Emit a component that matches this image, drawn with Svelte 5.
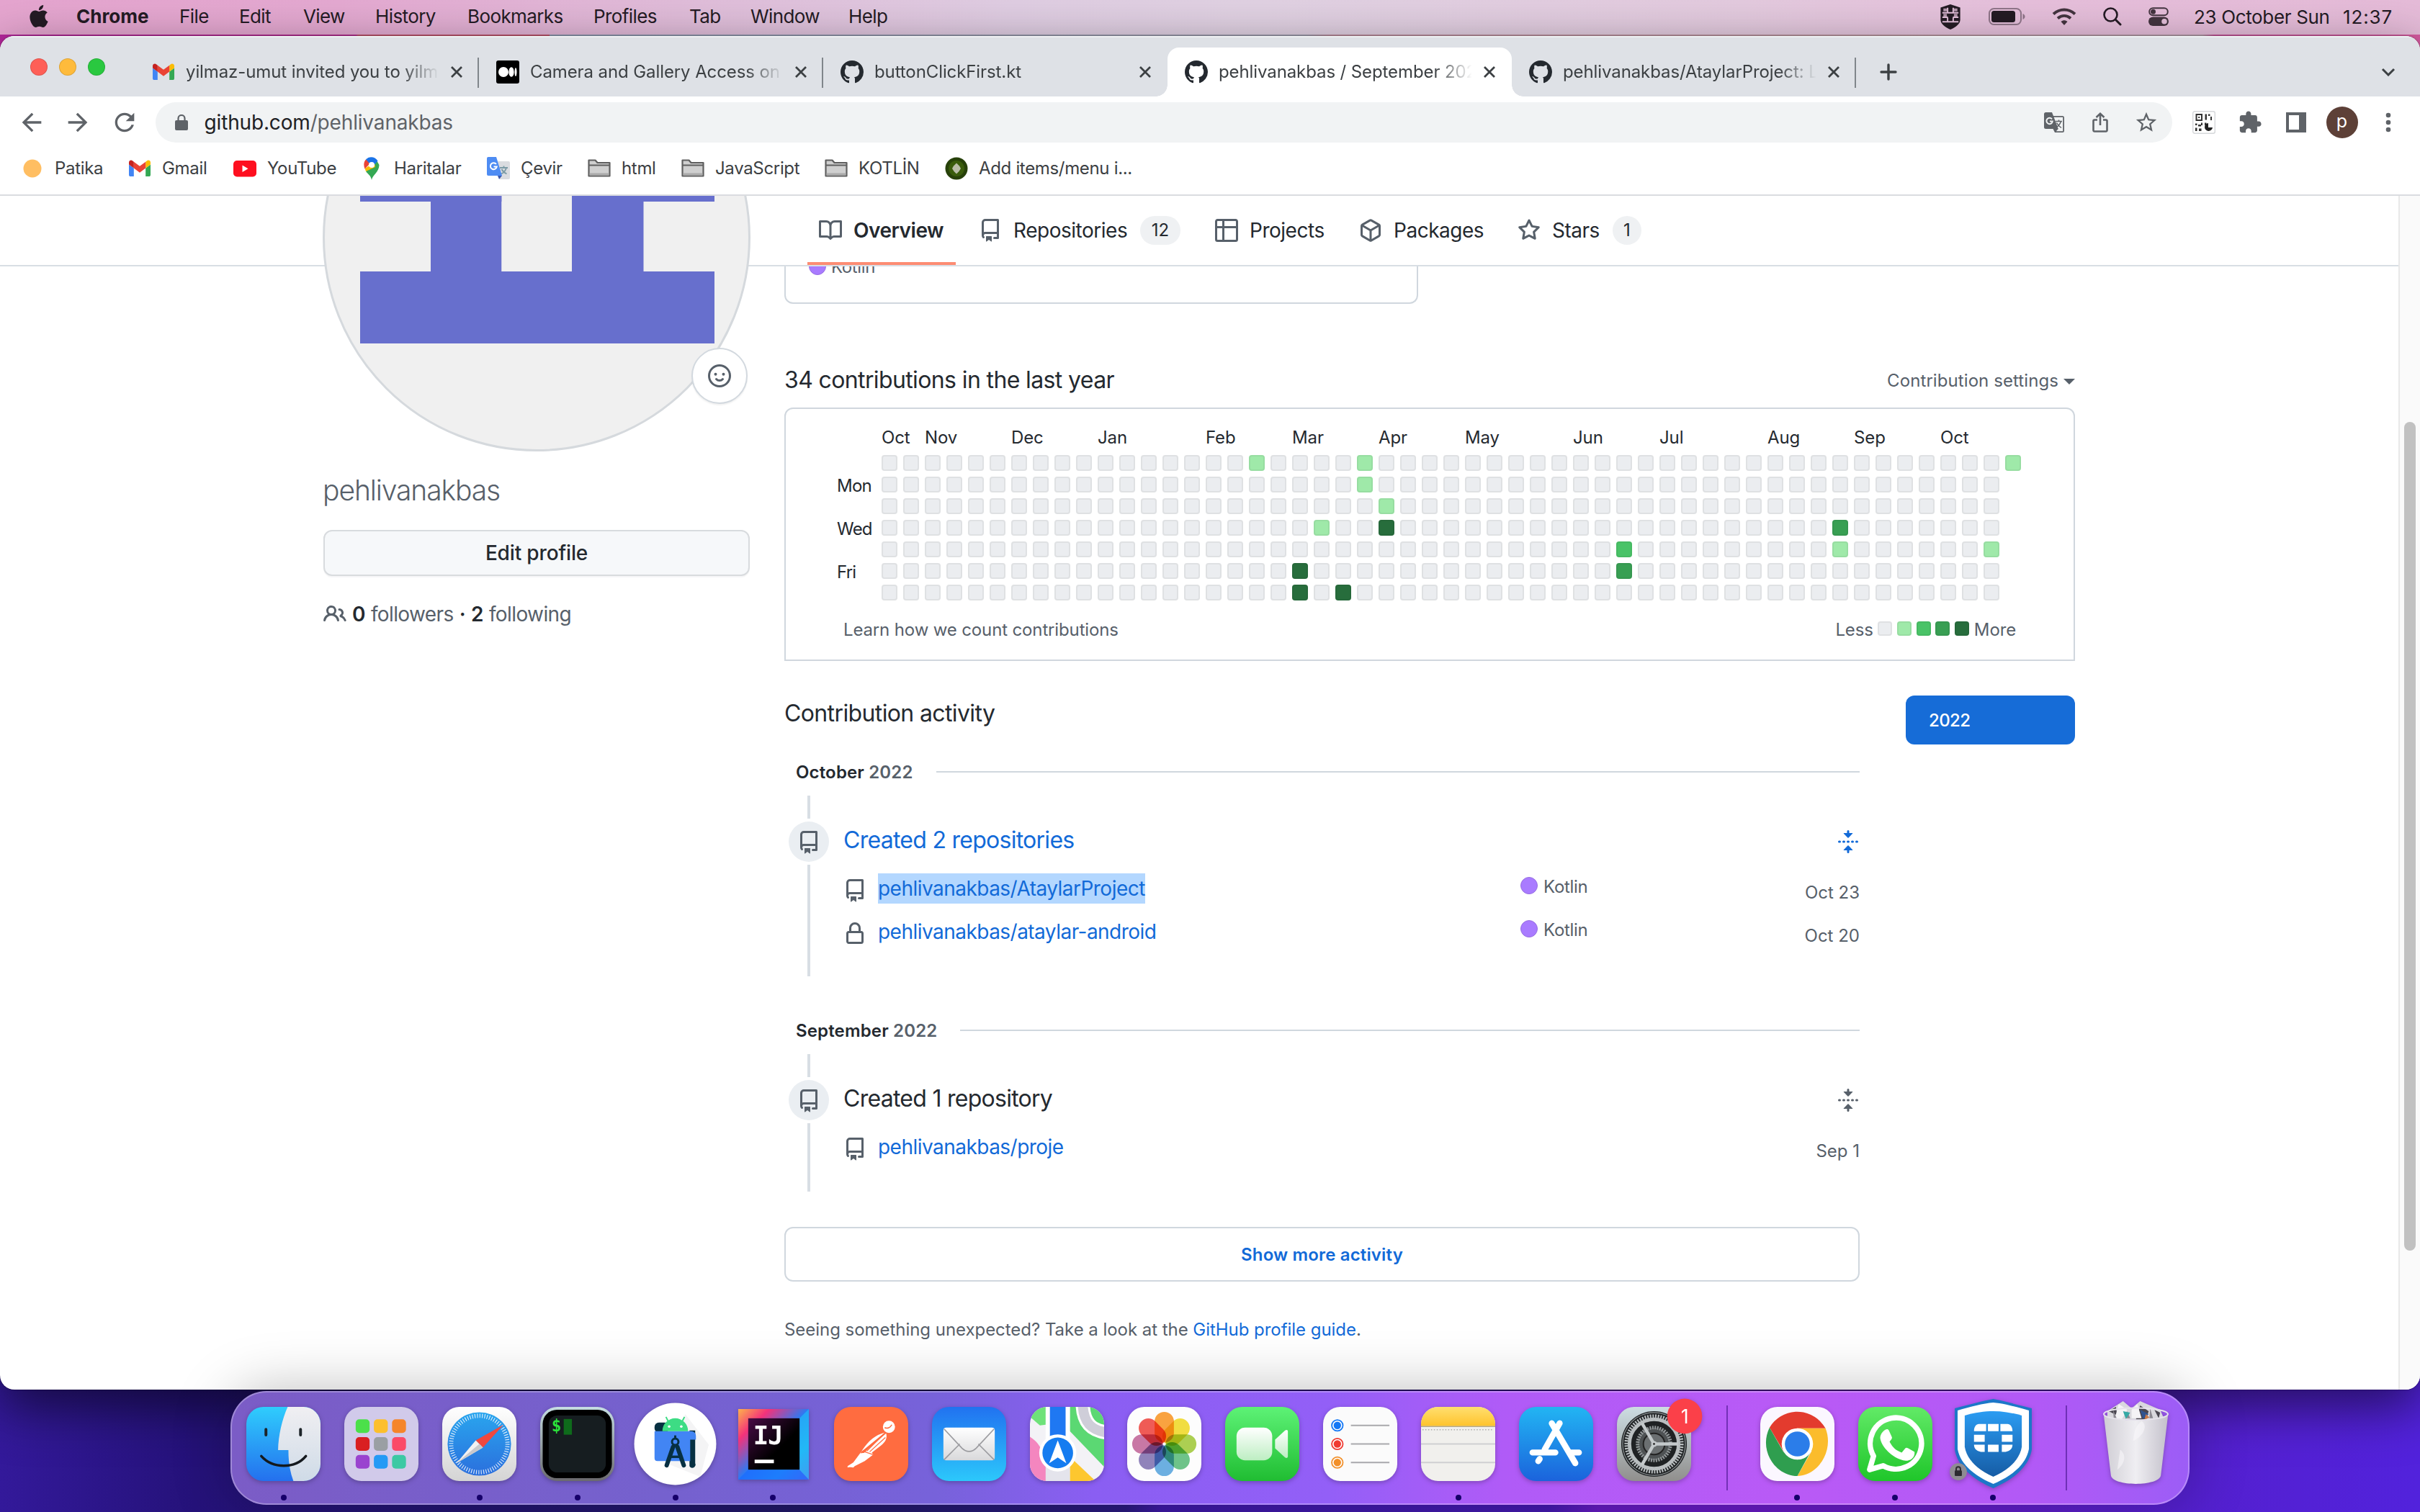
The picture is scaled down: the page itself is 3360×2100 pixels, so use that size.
<script>
  // Menu titles with their starting offset; each width is the distance to the next one.
  const menuStarts = [
    ['Chrome', 106], ['File', 249], ['Edit', 332], ['View', 421], ['History', 521], ['Bookmarks', 649],
    ['Profiles', 824], ['Tab', 957], ['Window', 1042], ['Help', 1178], ['', 1300]
  ];
  const menus = menuStarts.slice(0, -1).map(([label, x], i) => ({ label, width: menuStarts[i + 1][1] - x }));

  const tabs = [
    { icon: 'gmail', title: 'yilmaz-umut invited you to yilmaz', sep: true },
    { icon: 'medium', title: 'Camera and Gallery Access on A', sep: true },
    { icon: 'github', title: 'buttonClickFirst.kt' },
    { icon: 'github', title: 'pehlivanakbas / September 2022', active: true },
    { icon: 'github', title: 'pehlivanakbas/AtaylarProject: Lo', sep: true }
  ];

  const markStarts = [
    ['Patika', 'patika', 29], ['Gmail', 'gmail', 178], ['YouTube', 'youtube', 324], ['Haritalar', 'maps', 500],
    ['Çevir', 'translate', 676], ['html', 'folder', 816], ['JavaScript', 'folder', 946], ['KOTLİN', 'folder', 1145],
    ['Add items/menu i...', 'kiwi', 1312], ['', '', 1600]
  ];
  const bookmarks = markStarts.slice(0, -1).map(([label, icon, x], i) => ({ label, icon, width: markStarts[i + 1][2] - x }));

  const paths = {
    book: 'M0 1.75A.75.75 0 01.75 1h4.253c1.227 0 2.317.59 3 1.501A3.744 3.744 0 0111.006 1h4.245a.75.75 0 01.75.75v10.5a.75.75 0 01-.75.75h-4.507a2.25 2.25 0 00-1.591.659l-.622.621a.75.75 0 01-1.06 0l-.622-.621A2.25 2.25 0 005.258 13H.75a.75.75 0 01-.75-.75V1.75zm8.755 3a2.25 2.25 0 012.25-2.25H14.5v9h-3.757c-.71 0-1.4.201-1.992.572l.004-7.322zm-1.504 7.324l.004-5.073-.002-2.253A2.25 2.25 0 005.003 2.5H1.5v9h3.757a3.75 3.75 0 011.994.574z',
    repo: 'M2 2.5A2.5 2.5 0 014.5 0h8.75a.75.75 0 01.75.75v12.5a.75.75 0 01-.75.75h-2.5a.75.75 0 110-1.5h1.75v-2h-8a1 1 0 00-.714 1.7.75.75 0 01-1.072 1.05A2.495 2.495 0 012 11.5v-9zm10.5-1V9h-8c-.356 0-.694.074-1 .208V2.5a1 1 0 011-1h8zM5 12.25v3.25a.25.25 0 00.4.2l1.45-1.087a.25.25 0 01.3 0L8.6 15.7a.25.25 0 00.4-.2v-3.25a.25.25 0 00-.25-.25h-3.5a.25.25 0 00-.25.25z',
    table: 'M0 1.75C0 .784.784 0 1.75 0h12.5C15.216 0 16 .784 16 1.75v12.5A1.75 1.75 0 0114.25 16H1.75A1.75 1.75 0 010 14.25V1.75zM6.5 6.5v8h7.75a.25.25 0 00.25-.25V6.5h-8zm8-1.5V1.75a.25.25 0 00-.25-.25H6.5V5h8zm-13 1.5v7.75c0 .138.112.25.25.25H5v-8H1.5zM5 5V1.5H1.75a.25.25 0 00-.25.25V5H5z',
    box: 'M8.878.392a1.75 1.75 0 00-1.756 0l-5.25 3.045A1.75 1.75 0 001 4.951v6.098c0 .624.332 1.2.872 1.514l5.25 3.045a1.75 1.75 0 001.756 0l5.25-3.045c.54-.313.872-.89.872-1.514V4.951c0-.624-.332-1.2-.872-1.514L8.878.392zM7.875 1.69a.25.25 0 01.25 0l4.63 2.685L8 7.133 3.245 4.375l4.63-2.685zM2.5 5.677v5.372c0 .09.047.171.125.216l4.625 2.683V8.432L2.5 5.677zm6.25 8.271l4.625-2.683a.25.25 0 00.125-.216V5.677L8.75 8.432v5.516z',
    star: 'M8 .25a.75.75 0 01.673.418l1.882 3.815 4.21.612a.75.75 0 01.416 1.279l-3.046 2.97.719 4.192a.75.75 0 01-1.088.791L8 12.347l-3.766 1.98a.75.75 0 01-1.088-.79l.72-4.194L.818 6.374a.75.75 0 01.416-1.28l4.21-.611L7.327.668A.75.75 0 018 .25zm0 2.445L6.615 5.5a.75.75 0 01-.564.41l-3.097.45 2.24 2.184a.75.75 0 01.216.664l-.528 3.084 2.769-1.456a.75.75 0 01.698 0l2.77 1.456-.53-3.084a.75.75 0 01.216-.664l2.24-2.183-3.096-.45a.75.75 0 01-.564-.41L8 2.694v.001z',
    people: 'M5.5 3.5a2 2 0 100 4 2 2 0 000-4zM2 5.5a3.5 3.5 0 115.898 2.549 5.507 5.507 0 013.034 4.084.75.75 0 11-1.482.235 4.001 4.001 0 00-7.9 0 .75.75 0 01-1.482-.236A5.507 5.507 0 013.102 8.05 3.49 3.49 0 012 5.5zM11 4a.75.75 0 100 1.5 1.5 1.5 0 01.666 2.844.75.75 0 00-.416.672v.352a.75.75 0 00.574.73c1.2.289 2.162 1.2 2.522 2.372a.75.75 0 101.434-.44 5.01 5.01 0 00-2.56-3.012A3 3 0 0011 4z',
    lock: 'M4 4v2h-.25A1.75 1.75 0 002 7.75v5.5c0 .966.784 1.75 1.75 1.75h8.5A1.75 1.75 0 0014 13.25v-5.5A1.75 1.75 0 0012.25 6H12V4a4 4 0 10-8 0zm6.5 2V4a2.5 2.5 0 10-5 0v2h5zM12 7.5h.25a.25.25 0 01.25.25v5.5a.25.25 0 01-.25.25h-8.5a.25.25 0 01-.25-.25v-5.5a.25.25 0 01.25-.25H12z',
    fold: 'M10.896 2H8.75V.75a.75.75 0 00-1.5 0V2H5.104a.25.25 0 00-.177.427l2.896 2.896a.25.25 0 00.354 0l2.896-2.896A.25.25 0 0010.896 2zM8.75 15.25a.75.75 0 01-1.5 0V14H5.104a.25.25 0 01-.177-.427l2.896-2.896a.25.25 0 01.354 0l2.896 2.896a.25.25 0 01-.177.427H8.75v1.25zm-6.5-6.5a.75.75 0 000-1.5h-.5a.75.75 0 000 1.5h.5zM6 8a.75.75 0 01-.75.75h-.5a.75.75 0 010-1.5h.5A.75.75 0 016 8zm2.25.75a.75.75 0 000-1.5h-.5a.75.75 0 000 1.5h.5zM12 8a.75.75 0 01-.75.75h-.5a.75.75 0 010-1.5h.5A.75.75 0 0112 8zm2.25.75a.75.75 0 000-1.5h-.5a.75.75 0 000 1.5h.5z',
    github: 'M8 0C3.58 0 0 3.58 0 8c0 3.54 2.29 6.53 5.47 7.59.4.07.55-.17.55-.38 0-.19-.01-.82-.01-1.49-2.01.37-2.53-.49-2.69-.94-.09-.23-.48-.94-.82-1.13-.28-.15-.68-.52-.01-.53.63-.01 1.08.58 1.23.82.72 1.21 1.87.87 2.33.66.07-.52.28-.87.51-1.07-1.78-.2-3.64-.89-3.64-3.95 0-.87.31-1.59.82-2.15-.08-.2-.36-1.02.08-2.12 0 0 .67-.21 2.2.82.64-.18 1.32-.27 2-.27.68 0 1.36.09 2 .27 1.53-1.04 2.2-.82 2.2-.82.44 1.1.16 1.92.08 2.12.51.56.82 1.27.82 2.15 0 3.07-1.87 3.75-3.65 3.95.29.25.54.73.54 1.48 0 1.07-.01 1.93-.01 2.2 0 .21.15.46.55.38A8.013 8.013 0 0016 8c0-4.42-3.58-8-8-8z'
  };

  const nav = [
    { label: 'Overview', icon: 'book', width: 126, active: true },
    { label: 'Repositories', icon: 'repo', width: 160, count: 12 },
    { label: 'Projects', icon: 'table', width: 104 },
    { label: 'Packages', icon: 'box', width: 124 },
    { label: 'Stars', icon: 'star', width: 68, count: 1 }
  ];

  const months = [['Oct', 2], ['Nov', 4], ['Dec', 4], ['Jan', 5], ['Feb', 4], ['Mar', 4], ['Apr', 4], ['May', 5], ['Jun', 4], ['Jul', 5], ['Aug', 4], ['Sep', 4], ['Oct', 4]];
  const days = ['', 'Mon', '', 'Wed', '', 'Fri', ''];
  const levels = {
    '17-0': 1, '22-0': 1, '22-1': 1, '23-2': 1, '20-3': 1, '23-3': 4, '19-5': 4, '19-6': 4, '21-6': 4,
    '34-4': 2, '34-5': 3, '44-3': 3, '44-4': 1, '51-4': 1, '52-0': 1
  };
  const rows = days.map((label, d) => ({
    label,
    cells: Array.from({ length: d === 0 ? 53 : 52 }, (_, w) => levels[`${w}-${d}`] ?? 0)
  }));

  const activity = [
    {
      month: 'October', title: 'Created 2 repositories', hot: true,
      repos: [
        { icon: 'repo', name: 'pehlivanakbas/AtaylarProject', lang: 'Kotlin', date: 'Oct 23', selected: true },
        { icon: 'lock', name: 'pehlivanakbas/ataylar-android', lang: 'Kotlin', date: 'Oct 20' }
      ]
    },
    { month: 'September', title: 'Created 1 repository', repos: [{ icon: 'repo', name: 'pehlivanakbas/proje', date: 'Sep 1' }] }
  ];

  const dock = [
    ['finder', 1], ['launchpad', 0], ['safari', 1], ['terminal', 1], ['studio', 1], ['intellij', 1], ['postman', 0], ['mail', 0],
    ['maps', 0], ['photos', 0], ['facetime', 0], ['reminders', 0], ['notes', 1], ['appstore', 0], ['settings', 0], ['|', 0],
    ['chrome', 1], ['whatsapp', 1], ['shield', 1], ['|', 0], ['trash', 0]
  ].map(([name, running]) => ({ name, running }));

  const pads = ['#4be04a', '#fcbf2d', '#f5852b', '#d91f22', '#9a9fa3', '#fb4a68', '#9a43cf', '#259af5', '#3cc9a4'];
  const petals = ['#fb9a2b', '#f2dc2c', '#a5cc3f', '#5fbf7d', '#5da9e0', '#8577b5', '#c56a9c', '#f04a45'];
</script>

{#snippet oct(name)}
  <svg class="oct" viewBox="0 0 16 16"><path fill="currentColor" fill-rule="evenodd" d={paths[name]} /></svg>
{/snippet}

{#snippet favicon(name)}
  <svg class="fav" viewBox="0 0 32 32">
    {#if name === 'gmail'}
      <g transform="translate(1 4.6) scale(.341) translate(-52 -42)">
        <path fill="#4285f4" d="M58 108h14V74L52 59v43c0 3.32 2.69 6 6 6" />
        <path fill="#34a853" d="M120 108h14c3.32 0 6-2.69 6-6V59l-20 15" />
        <path fill="#fbbc04" d="M120 48v26l20-15v-8c0-7.42-8.47-11.65-14.4-7.2" />
        <path fill="#ea4335" d="M72 74V48l24 18 24-18v26L96 92" />
        <path fill="#c5221f" d="M52 51v8l20 15V48l-5.6-4.2c-5.94-4.45-14.4-.22-14.4 7.2" />
      </g>
    {:else if name === 'medium'}
      <rect width="32" height="32" rx="3" fill="#000" />
      <circle cx="10" cy="16" r="7" fill="#fff" />
      <ellipse cx="21" cy="16" rx="3.6" ry="6.8" fill="#fff" />
      <ellipse cx="27" cy="16" rx="1.5" ry="6" fill="#fff" />
    {:else if name === 'github'}
      <path fill="#24292f" fill-rule="evenodd" transform="scale(2)" d={paths.github} />
    {:else if name === 'patika'}
      <circle cx="16" cy="16" r="12.5" fill="#ffbe62" />
    {:else if name === 'youtube'}
      <rect x="0" y="5" width="32" height="22.5" rx="5" fill="#fe0f1f" />
      <path fill="#fff" d="M12.5 11.5v9.4l8-4.7z" />
    {:else if name === 'maps'}
      <path fill="#34a853" d="M16 32c1-7 10.500-11 10.500-21L23 5 8 20c3 4 7 6 8 12z" />
      <path fill="#fbbc04" d="M8 20 6.500 16 20 8l1 6z" />
      <path fill="#ea4335" d="M8 3.500C5 6.500 4.500 12 6.500 16.500L15 8z" />
      <path fill="#1a73e8" d="M8 3.500C12-1.500 21-1 24.500 5.500L17 14 9.500 5z" />
      <circle cx="16" cy="11" r="4" fill="#fff" />
    {:else if name === 'translate'}
      <path fill="#dadce0" d="M12 6h18a2 2 0 0 1 2 2v21a2 2 0 0 1-2 2H18z" />
      <path stroke="#7b9ba6" stroke-width="1.800" fill="none" d="M18 15h11M23.500 12.500V15M27 15c-1 4-4 7-7 8.500M20.500 17c1.500 3 4 5 7 6.500" />
      <path fill="#4e8cf3" d="M2 0h11l8 26H2a2 2 0 0 1-2-2V2a2 2 0 0 1 2-2z" />
      <path fill="#3b58ad" d="M15 26h6l-4 5z" />
      <path fill="none" stroke="#fff" stroke-width="2" d="M13 10a4.500 4.500 0 1 0 .8 3.400H9.500" />
    {:else if name === 'folder'}
      <path fill="#cfcfcf" stroke="#5f5f5f" stroke-width="2.200" stroke-linejoin="round" d="M1.500 4.500h9l3 3.500h17v18.500h-29z" />
      <path stroke="#5f5f5f" stroke-width="2" d="M2 11.500h28" /><path fill="#aaa" d="M2.600 22.500h26.800v3H2.600z" />
    {:else if name === 'kiwi'}
      <circle cx="16" cy="16" r="15.500" fill="#27410a" /><circle cx="16" cy="16" r="11" fill="#3a5c0c" /><path fill="#b9bda8" d="m16 8.500 4 4 2 3.500-2.500 4-3.500 3.500-3.500-3.500-2.500-4 2-3.500z" />
    {/if}
  </svg>
{/snippet}

{#snippet app(name)}
  <svg class="app" viewBox="0 0 104 104">
    {#if name === 'finder'}
      <clipPath id="sq"><rect width="104" height="104" rx="24" /></clipPath>
      <linearGradient id="fb" x2="0" y2="1"><stop stop-color="#2fcdfd" /><stop offset="1" stop-color="#2470ee" /></linearGradient>
      <linearGradient id="fw" x2="0" y2="1"><stop stop-color="#f0eff2" /><stop offset="1" stop-color="#cfdbe7" /></linearGradient>
      <g clip-path="url(#sq)">
        <rect width="104" height="104" fill="url(#fb)" />
        <path fill="url(#fw)" d="M58 0C50 18 45 40 44.500 60.500H59c0 16 2 30 7 43.500h38V0z" />
        <path stroke="#1d2429" stroke-width="4" stroke-linecap="round" d="M27.500 31.500v8M76 31.500v8" />
        <path fill="none" stroke="#14191d" stroke-width="3.500" stroke-linecap="round" d="M21 69c8 9 19 13.500 31.500 13.500S76 78 83.500 69" />
      </g>
    {:else if name === 'launchpad'}
      <rect width="104" height="104" rx="24" fill="#d1caea" />
      {#each pads as color, i}
        <rect x={16 + (i % 3) * 25.500} y={17.500 + Math.floor(i / 3) * 25} width="19.500" height="19" rx="5" fill={color} />
      {/each}
    {:else if name === 'safari'}
      <linearGradient id="sw" x2="0" y2="1"><stop stop-color="#fff" /><stop offset="1" stop-color="#d4d4d4" /></linearGradient>
      <linearGradient id="sb" x2="0" y2="1"><stop stop-color="#29a5ee" /><stop offset="1" stop-color="#2b6fdd" /></linearGradient>
      <rect width="104" height="104" rx="24" fill="url(#sw)" /><circle cx="52" cy="52" r="44.500" fill="url(#sb)" />
      <circle cx="52" cy="52" r="39.500" fill="none" stroke="#fff" stroke-width="6" stroke-dasharray="1.100 2.347" opacity=".85" />
      <path fill="#f0483e" d="m86 25-39 22 10 10z" /><path fill="#f3f1f1" d="m20 79 27-32 10 10z" /><path fill="#c9c9cc" d="m20 79 32-27 5 5z" />
    {:else if name === 'terminal'}
      <linearGradient id="tg" x2="0" y2="1"><stop stop-color="#c5dde2" /><stop offset="1" stop-color="#6b6a6e" /></linearGradient>
      <rect width="104" height="104" rx="24" fill="url(#tg)" /><rect x="3.500" y="4" width="97" height="96" rx="20" fill="#000" />
      <rect x="12" y="12" width="80" height="80" rx="12" fill="#161d20" />
      <text x="16" y="34" class="mono" font-size="23" fill="#2be23a">$</text><rect x="33" y="17" width="11.500" height="22" fill="#0e6b1b" />
    {:else if name === 'studio'}
      <circle cx="52" cy="52" r="57.500" fill="#fff" /><path fill="#ececee" d="m66 10 33 43-12 45-45-18z" opacity=".6" />
      <rect x="23" y="22" width="20" height="14" rx="6" fill="#073042" /><path fill="#073042" d="M72 33h8v46a4 4 0 0 1-8 4z" />
      <path fill="#4285f4" d="M23 34h50c6 0 8 3 8 7v5h-8v30H27a4 4 0 0 1-4-4z" />
      <path fill="#3ddc84" d="M34 34a18 18 0 0 1 36 0z" /><path stroke="#3ddc84" stroke-width="2" d="m42 20-3-6M62 20l3-6" />
      <circle cx="43.500" cy="27.500" r="1.800" fill="#fff" /><circle cx="60.500" cy="27.500" r="1.800" fill="#fff" />
      <path fill="none" stroke="#073042" stroke-width="6" stroke-linecap="round" d="M49 56 40 82M55 56l9 26" /><path stroke="#073042" stroke-width="3.500" d="M46 70h12" />
      <circle cx="52" cy="49" r="4.500" fill="#4285f4" stroke="#073042" stroke-width="3" /><path stroke="#073042" stroke-width="3" d="M52 40v5" />
    {:else if name === 'intellij'}
      <linearGradient id="ij1" x2="1" y2="1"><stop stop-color="#fdb24c" /><stop offset=".22" stop-color="#f4327a" /><stop offset=".5" stop-color="#2b7af4" /><stop offset=".75" stop-color="#22a8f5" /><stop offset="1" stop-color="#6f62e8" /></linearGradient>
      <linearGradient id="ij2" x2="1" y2="1"><stop stop-color="#4a0b47" /><stop offset=".6" stop-color="#000" /></linearGradient>
      <rect x="3" y="3" width="99" height="99" fill="url(#ij1)" /><path fill="#1b6bff" d="M3 102 17 88h72l13 14z" opacity=".7" /><path fill="#23c3f7" d="M102 3 89 16v72l13 14z" opacity=".6" />
      <rect x="17" y="16" width="72" height="72" fill="url(#ij2)" /><text x="24" y="52" class="mono" font-size="36" fill="#fff" textLength="42">IJ</text><rect x="26" y="74" width="27" height="5" fill="#fff" />
    {:else if name === 'postman'}
      <rect width="104" height="104" rx="24" fill="#ff6c40" />
      <ellipse cx="77" cy="28" rx="8.500" ry="8.500" fill="#fff" /><path stroke="#ff6c40" stroke-width="1.500" fill="none" d="M71 29c4 2 8 0 10-4" />
      <path fill="#fff" d="M71 36c-13 3-23 12-31 24l-3 5 7-1-16 18-5 2-4 1 0-2 8-5 11-15M73 37c2 7-1 12-7 17L53 64l2 3-12 9-14 7-2 2-7-1z" /><path stroke="#ff6c40" stroke-width="1.300" d="M70 38 46 62M72 43 50 63M40 62l15 5" />
    {:else if name === 'mail'}
      <linearGradient id="mb" x2="0" y2="1"><stop stop-color="#2172f0" /><stop offset="1" stop-color="#2cc8fb" /></linearGradient>
      <linearGradient id="mw" x2="0" y2="1"><stop stop-color="#fff" /><stop offset="1" stop-color="#d9d9db" /></linearGradient>
      <rect width="104" height="104" rx="24" fill="url(#mb)" /><rect x="16" y="29" width="72" height="46" rx="4" fill="url(#mw)" />
      <path fill="none" stroke="#9c9ca0" stroke-width="1.700" d="m17 74 22-22M87 74 65 52M17 31l25 27c6 6 14 6 20 0l25-27" />
    {:else if name === 'maps'}
      <g clip-path="url(#sq)">
        <rect width="104" height="104" fill="#f3f2f6" /><path fill="#6ee27a" d="M0 0h30v24L14 26 0 14z" /><path fill="#5bd873" d="M56 0h48v84L56 34z" /><path fill="#f486bf" d="M0 42c16 10 24 28 24 62H0z" />
        <path fill="#fdc72f" d="M56 70v34h36z" /><path fill="none" stroke="#fff" stroke-width="20" d="M74-6c0 30 14 40 36 42" /><path fill="none" stroke="#cfced9" stroke-width="14" d="M74-6c0 30 14 40 36 42" /><path fill="#e4e4ec" d="M22 60h34v44H22z" />
        <path fill="#fff" d="M22 0h34v60H22z" /><path fill="#1f78f2" d="M28 0h22v62H28z" />
      </g>
      <circle cx="39" cy="64.500" r="26" fill="#fff" /><circle cx="39" cy="64.500" r="21.500" fill="#157cf0" /><path fill="#fff" d="m39 47 12 32-12-8-12 8z" />
    {:else if name === 'photos'}
      <rect width="104" height="104" rx="24" fill="#fdfdfd" />
      {#each petals as color, i}
        <rect class="petal" x="38.500" y="7" width="27" height="43" rx="13.500" fill={color} transform="rotate({i * 45} 52 52)" />
      {/each}
    {:else if name === 'facetime'}
      <linearGradient id="fg" x2="0" y2="1"><stop stop-color="#5df276" /><stop offset="1" stop-color="#20bd32" /></linearGradient>
      <linearGradient id="fc" x2="0" y2="1"><stop stop-color="#fff" /><stop offset="1" stop-color="#bdeec2" /></linearGradient>
      <rect width="104" height="104" rx="24" fill="url(#fg)" /><rect x="16" y="29" width="50" height="46" rx="12" fill="url(#fc)" /><path fill="url(#fc)" d="M70 46 84 33c2-1 4-1 4 2v34c0 3-2 3-4 2L70 58z" />
    {:else if name === 'reminders'}
      <rect width="104" height="104" rx="24" fill="#fbfbfb" />
      {#each ['#1478f5', '#f03a30', '#f2902a'] as color, i}
        <circle cx="20" cy={26 + i * 26} r="7.800" fill="#fff" stroke={color} stroke-width="1.800" /><circle cx="20" cy={26 + i * 26} r="5.200" fill={color} /><path stroke="#a9a9ad" stroke-width="2" d="M39 {26 + i * 26}h54" />
      {/each}
    {:else if name === 'notes'}
      <linearGradient id="ny" x2="0" y2="1"><stop stop-color="#ffdf70" /><stop offset="1" stop-color="#ffc32c" /></linearGradient>
      <g clip-path="url(#sq)"><rect width="104" height="104" fill="#f1f0ed" /><rect width="104" height="27" fill="url(#ny)" /></g>
      <path stroke="#b5a98a" stroke-width="1.500" d="M0 27.500h104" /><path stroke="#aaa" stroke-width="1.500" stroke-dasharray="1.500 2.500" d="M2 32h100" /><path stroke="#cfcfd2" stroke-width="2" d="M0 52h104M0 78h104" />
    {:else if name === 'appstore'}
      <linearGradient id="as" x2="0" y2="1"><stop stop-color="#22b5f3" /><stop offset="1" stop-color="#1b63dc" /></linearGradient>
      <rect width="104" height="104" rx="24" fill="url(#as)" />
      <path stroke="#fff" stroke-width="8.500" stroke-linecap="round" d="M57 23 36 60M46 23l33 56M27 76l2-3M19 64h32M70 64h14" />
    {:else if name === 'settings'}
      <linearGradient id="st" x2="0" y2="1"><stop stop-color="#cddde3" /><stop offset="1" stop-color="#908f8d" /></linearGradient>
      <rect width="104" height="104" rx="24" fill="url(#st)" /><circle cx="52" cy="52" r="46" fill="#1f2224" /><circle cx="52" cy="52" r="44" fill="none" stroke="#8d9395" stroke-width="1.200" />
      <circle cx="52" cy="52" r="39" fill="none" stroke="#b9bec0" stroke-width="5" stroke-dasharray="2 1.700" /><circle cx="52" cy="52" r="34.500" fill="none" stroke="#b9bec0" stroke-width="5" />
      <circle cx="52" cy="52" r="23" fill="#4e5254" stroke="#93989a" stroke-width="5" stroke-dasharray="2 1.500" /><circle cx="52" cy="52" r="15" fill="#6b6f71" stroke="#222" stroke-width="2" />
      <path stroke="#c4c9cb" stroke-width="4.500" d="M52 52h34M52 52 35 22.500M52 52 35 81.500" /><circle cx="52" cy="52" r="4" fill="#c4c9cb" /><circle cx="52" cy="52" r="1.500" fill="#333" />
      <circle cx="95" cy="13" r="24.500" fill="#fb4049" /><text x="95" y="23" class="badge" text-anchor="middle" font-size="27" fill="#fff">1</text>
    {:else if name === 'chrome'}
      <rect width="104" height="104" rx="24" fill="#fbf7ff" />
      <path fill="#e33b2e" d="M52 30h39.500L88 25A45 45 0 0 0 13 29l20 34z" /><path fill="#fbbc2c" d="M52 30h39.500c12 30-9 66-39.500 67l20-35z" /><path fill="#2f9e4f" d="m13 29 19.500 34L52 74l18-10-18 33C22 97-3 62 13 29z" />
      <circle cx="52" cy="52" r="22" fill="#fff" /><circle cx="52" cy="52" r="17.500" fill="#2b7de9" />
    {:else if name === 'whatsapp'}
      <linearGradient id="wg" x2="0" y2="1"><stop stop-color="#62ea67" /><stop offset="1" stop-color="#1fc62a" /></linearGradient>
      <rect width="104" height="104" rx="24" fill="url(#wg)" />
      <path fill="none" stroke="#fff" stroke-width="7.500" stroke-linejoin="round" d="m16 88 5.500-19A36 36 0 1 1 35 82.500z" />
      <path fill="#fff" d="M38 32c2-1 4-1 5 1l4 9c1 2 0 3-3 7 5 9 9 12 17 15l5-6c1-1 2-1 4 0l9 5c1 10-9 14-16 12-16-4-30-19-32-30-1-5 3-11 7-13z" />
    {:else if name === 'shield'}
      <linearGradient id="sh" x2="0" y2="1"><stop stop-color="#2b9cf2" /><stop offset="1" stop-color="#165ca5" /></linearGradient>
      <path fill="#1c77c8" d="M-2 2C18-3 36-8 52-11c16 3 34 8 54 13v58c-4 24-26 42-54 54C24 102 2 84-2 60z" />
      <path fill="#fff" d="M2 5C20 0 38-5 52-6c14 1 32 6 50 11v54c-4 22-24 38-50 49C26 97 6 81 2 59z" />
      <path fill="url(#sh)" d="M12 12c14-4 28-6 40-6s26 2 40 6v44c-3 18-18 32-40 42C30 88 15 74 12 56z" />
      <path fill="#fff" d="M32 24h10v10H25c0-6 3-10 7-10zM44.500 24h15v10h-15zM62 24h10c4 0 7 4 7 10H62zM25 39h15v10H25zM64 39h15v10H64zM25 53h15v10c-9 1-15-3-15-10zM44.500 53h15v10h-15zM64 53h15c0 7-6 11-15 10z" />
      <circle cx="3" cy="91" r="12" fill="#8e8b92" /><rect x="-2" y="89" width="10" height="8" rx="1" fill="#2c2a30" /><path fill="none" stroke="#2c2a30" stroke-width="2" d="M0 90v-3a3 3 0 0 1 6 0v3" />
    {:else if name === 'trash'}
      <linearGradient id="tr"><stop stop-color="#cfcdd4" /><stop offset=".5" stop-color="#efeef2" /><stop offset="1" stop-color="#c4c1cb" /></linearGradient>
      <path fill="#d9d8de" d="m12 6 22-14 12 10 12-10L86 4l6 14H12z" /><path fill="#494650" d="m14 6 10-6 2 12zM58-2l12 8-4 12H52zM78 4l8 4-2 8z" /><path fill="#f4f3f6" d="m28-4 12 8-8 14H22zM46 4l8-8 6 20H46z" /><path fill="#8c8992" d="m20 4 5 12h-4zM72 2l4 14h-5zM40 6l4 10h-6z" /><path fill="#35a9a6" d="m34 6 10 2-6 9z" /><path fill="#2f5390" d="m58 4 12 6-8 7z" /><path fill="#c97b4a" d="m66 10 5 5-7 3z" />
      <path fill="url(#tr)" d="M7 12c20 9 70 9 90 0l-10 84c-2 16-68 16-70 0z" /><path fill="#f8f7fa" opacity=".6" d="M60 20c10 6 2 22-12 28 2-12 2-20 12-28zM30 60c10 8 6 20-4 28z" /><ellipse cx="52" cy="10" rx="45" ry="8.500" fill="none" stroke="#e6e3ec" stroke-width="2" />
    {/if}
  </svg>
{/snippet}

<div class="desktop">
  <header class="menubar">
    <svg class="apple" viewBox="0 0 24 24"><path d="M12.152 6.896c-.948 0-2.415-1.078-3.960-1.040-2.040.027-3.910 1.183-4.961 3.014-2.117 3.675-.546 9.103 1.519 12.090 1.013 1.454 2.208 3.090 3.792 3.039 1.520-.065 2.090-.987 3.935-.987 1.831 0 2.350.987 3.960.948 1.637-.026 2.676-1.480 3.676-2.948 1.156-1.688 1.636-3.325 1.662-3.415-.039-.013-3.182-1.221-3.220-4.857-.026-3.040 2.480-4.494 2.597-4.559-1.429-2.090-3.623-2.324-4.390-2.376-2-.156-3.675 1.090-4.610 1.090zM15.530 3.830c.843-1.012 1.400-2.427 1.245-3.830-1.207.052-2.662.805-3.532 1.818-.780.896-1.454 2.338-1.273 3.714 1.338.104 2.715-.688 3.559-1.701" /></svg>
    {#each menus as m, i}<span class="menu" class:bold={i === 0} style:width="{m.width}px">{m.label}</span>{/each}
    <div class="status">
      <svg class="s-shield" viewBox="0 0 30 36"><path fill="#241b24" d="M15 0 29 4.500V22c0 6-6 10-14 14C7 32 1 28 1 22V4.500z" /><path stroke="#e3c0da" stroke-width="2" fill="none" d="M3.500 12h23M3.500 18.500h8M18.500 18.500h8M3.500 25h23M11 5v7M19 5v7M11 19v7M19 19v7" /><path fill="#e3c0da" d="M5 6h5v4H5zM20 6h5v4h-5zM5 13.500h5v4H5zM20 13.500h5v4h-5z" opacity=".75" /></svg>
      <svg class="s-battery" viewBox="0 0 52 24"><rect x="1" y="1" width="44" height="22" rx="6.500" fill="none" stroke="#8f7589" stroke-width="2" /><rect x="4" y="4" width="33" height="16" rx="3.500" fill="#241b24" /><path fill="#8f7589" d="M47.500 8c4 1.500 4 6.500 0 8z" /></svg>
      <svg class="s-wifi" viewBox="0 0 34 24"><path fill="none" stroke="#43343f" stroke-width="4" d="M2 8.500c9-8 21-8 30 0M8 14.500c5.500-4.700 12.500-4.700 18 0" /><path fill="#43343f" d="M12.500 19c3-2.500 6-2.500 9 0L17 24z" /></svg>
      <svg class="s-search" viewBox="0 0 26 26"><circle cx="10.500" cy="10.500" r="9" fill="none" stroke="#241b24" stroke-width="2.600" /><path stroke="#241b24" stroke-width="3" stroke-linecap="round" d="m17.500 17.500 6.500 6.500" /></svg>
      <svg class="s-control" viewBox="0 0 28 26"><rect x="1.200" y="1.200" width="25.600" height="10" rx="5" fill="none" stroke="#43343f" stroke-width="2" /><circle cx="6.500" cy="6.200" r="3.500" fill="#43343f" /><rect y="13.500" width="28" height="12.500" rx="6.200" fill="#43343f" /><circle cx="22" cy="19.700" r="3.800" fill="#e4bfda" /></svg>
      <span class="date">23 October Sun</span><span class="time">12:37</span>
    </div>
  </header>

  <main class="window">
    <div class="tabstrip">
      <div class="lights"><i class="red"></i><i class="amber"></i><i class="green"></i></div>
      {#each tabs as t}
        <div class="tab" class:active={t.active} class:sep={t.sep}>
          {@render favicon(t.icon)}
          <span class="tab-title">{t.title}</span>
          <svg class="close" viewBox="0 0 18 18"><path stroke="#3c4043" stroke-width="2.800" d="m2 2 14 14M16 2 2 16" /></svg>
        </div>
      {/each}
      <svg class="plus" viewBox="0 0 24 24"><path stroke="#3c4043" stroke-width="3.400" stroke-linecap="round" d="M12 2v20M2 12h20" /></svg>
      <svg class="chevron" viewBox="0 0 20 12"><path fill="none" stroke="#3c4043" stroke-width="3" d="m2 2 8 8 8-8" /></svg>
    </div>

    <div class="toolbar">
      <div class="nav-buttons">
        <svg viewBox="0 0 24 24"><path d="M20 11H7.830l5.590-5.590L12 4l-8 8 8 8 1.410-1.410L7.830 13H20v-2z" /></svg>
        <svg viewBox="0 0 24 24"><path d="m12 4-1.410 1.410L16.170 11H4v2h12.170l-5.580 5.590L12 20l8-8z" /></svg>
        <svg viewBox="0 0 24 24"><path d="M17.650 6.350C16.200 4.900 14.210 4 12 4c-4.420 0-7.990 3.580-7.990 8s3.570 8 7.990 8c3.730 0 6.840-2.550 7.730-6h-2.080c-.820 2.330-3.040 4-5.650 4-3.310 0-6-2.690-6-6s2.690-6 6-6c1.660 0 3.140.690 4.220 1.780L13 11h7V4l-2.350 2.350z" /></svg>
      </div>
      <div class="omnibox">
        <svg class="padlock" viewBox="0 0 18 22"><rect y="8" width="18" height="14" rx="2" fill="#5f6368" /><path fill="none" stroke="#5f6368" stroke-width="2.200" d="M4.500 9V5.500a4.500 4.500 0 0 1 9 0V9" /></svg>
        <span class="url">github.com<em>/pehlivanakbas</em></span>
        <div class="slots">
          <svg viewBox="0 0 28 28"><path fill="#5f6368" d="M2.500 0H11l2 5h12.500A2.500 2.500 0 0 1 28 7.500v18a2.500 2.500 0 0 1-2.500 2.500H15l-2.500-5h-10A2.500 2.500 0 0 1 0 20.500v-18A2.500 2.500 0 0 1 2.500 0z" /><path fill="#f1f3f4" d="M13.600 6.700h12.600v19.600h-9.400l3-3.300z" /><path fill="none" stroke="#f1f3f4" stroke-width="2" d="M11 9.500a4.200 4.200 0 1 0 .8 3H8" /><path fill="none" stroke="#5f6368" stroke-width="1.500" d="M16 12.500h9M20.500 10.500v2M23.500 12.500c-1 3.500-3 6-6 8M17.500 14.500c1.500 3 3.500 5 6.500 7" /></svg>
          <svg viewBox="0 0 28 28"><path fill="none" stroke="#5f6368" stroke-width="2.600" d="M10 10.500H6a1.500 1.500 0 0 0-1.500 1.500v13A1.500 1.500 0 0 0 6 26.500h16a1.500 1.500 0 0 0 1.500-1.500V12a1.500 1.500 0 0 0-1.500-1.500h-4M14 18V2M8.500 7 14 1.800 19.500 7" /></svg>
          <svg class="wide" viewBox="0 0 24 24"><path fill="#5f6368" d="m22 9.240-7.190-.620L12 2 9.190 8.630 2 9.240l5.460 4.730L5.820 21 12 17.270 18.180 21l-1.630-7.030L22 9.240zM12 15.400l-3.760 2.270 1-4.280-3.320-2.880 4.380-.380L12 6.100l1.710 4.040 4.380.380-3.320 2.880 1 4.280L12 15.400z" /></svg>
        </div>
      </div>
      <div class="slots actions">
        <svg class="ext" viewBox="0 0 32 32"><rect x=".700" y=".700" width="30.600" height="30.600" rx="2.500" fill="#fff" stroke="#d5d7da" stroke-width="1.400" /><path fill="none" stroke="#333" stroke-width="2" d="M5.500 5h7.500v8H5.500z" /><path fill="#333" d="M8.200 8h2v2h-2zM17.500 4.500h2.500v8h-2.500zM22 4.500h2.500V7H22zM25 8h2v5h-2zM4 17.500h2.500V20H4zM8 19h4v2.500H8zM12 16.500h2V20h-2zM4 23.500h2.500V28H4zM9 24.500h3.500V28H9zM17 16.500h2.500V20H17z" /><path fill="#222" d="M22 17v6h6a5.500 5.500 0 1 1-6-6z" /></svg>
        <svg class="wide" viewBox="0 0 24 24"><path fill="#5f6368" d="M20.500 11H19V7c0-1.100-.900-2-2-2h-4V3.500C13 2.120 11.880 1 10.500 1S8 2.120 8 3.500V5H4c-1.100 0-1.990.900-1.990 2v3.800H3.500c1.490 0 2.700 1.210 2.700 2.700s-1.210 2.700-2.700 2.700H2V20c0 1.100.900 2 2 2h3.800v-1.500c0-1.490 1.210-2.700 2.700-2.700 1.490 0 2.700 1.210 2.700 2.700V22H17c1.100 0 2-.900 2-2v-4h1.500c1.380 0 2.500-1.120 2.500-2.500S21.880 11 20.500 11z" /></svg>
        <svg viewBox="0 0 28 28"><path fill="#5f6368" fill-rule="evenodd" d="M0 0h28v28H0zm4 4v20h14V4z" /></svg>
        <span class="profile"><b>p</b></span>
        <svg viewBox="0 0 28 28"><path fill="#5f6368" d="M14 .700a3.300 3.300 0 1 1 0 6.600 3.300 3.300 0 0 1 0-6.600zm0 10a3.300 3.300 0 1 1 0 6.600 3.300 3.300 0 0 1 0-6.600zm0 10a3.300 3.300 0 1 1 0 6.600 3.300 3.300 0 0 1 0-6.600z" /></svg>
      </div>
    </div>

    <div class="bookmarks">
      {#each bookmarks as b}
        <div class="bookmark" style:width="{b.width}px">{@render favicon(b.icon)}<span>{b.label}</span></div>
      {/each}
    </div>

    <div class="page">
      <div class="doc">
        <nav>
          {#each nav as n}
            <a class="nav-item" class:current={n.active} href="#top">
              {@render oct(n.icon)}
              <span class="nav-label" style:width="{n.width}px">{n.label}</span>
              {#if n.count}<span class="counter" class:double={n.count > 9}>{n.count}</span>{/if}
            </a>
          {/each}
        </nav>

        <div class="columns">
          <aside>
            <div class="avatar-wrap">
              <svg class="avatar" viewBox="0 238 594 356">
                <circle cx="297" cy="296" r="295.500" fill="#f0f0f0" stroke="#d5d9dd" stroke-width="3" />
                <path fill="#676fcd" d="M52 149h492v97h-98.500v97H544v100H52V343h98v-97H52zM248.500 246v97H346v-97z" fill-rule="evenodd" />
                <path fill="#f0f0f0" d="M248.500 230H346v113h-97.500z" />
              </svg>
              <div class="emoji">
                <svg viewBox="0 0 32 32"><circle cx="16" cy="16" r="14.500" fill="none" stroke="#57606a" stroke-width="3" /><circle cx="10.500" cy="13.800" r="2" fill="#57606a" /><circle cx="21.500" cy="13.800" r="2" fill="#57606a" /><path fill="none" stroke="#57606a" stroke-width="3" stroke-linecap="round" d="M11.500 20.500c2.400 2.700 6.600 2.700 9 0" /></svg>
              </div>
            </div>
            <h1>pehlivanakbas</h1>
            <button class="edit">Edit profile</button>
            <p class="follow">{@render oct('people')}<b>0</b><span>followers</span><b class="dot-sep">·</b><b>2</b><span>following</span></p>
          </aside>

          <section class="content">
            <div class="pinned"><i class="lang-dot"></i><span>Kotlin</span></div>

            <div class="heading-row">
              <h2>34 contributions in the last year</h2>
              <span class="muted-link">Contribution settings<i class="caret"></i></span>
            </div>

            <div class="calendar">
              <div class="months">{#each months as [m, weeks]}<span style:width="{weeks * 30}px">{m}</span>{/each}</div>
              {#each rows as r}
                <div class="week-row"><span class="day">{r.label}</span>{#each r.cells as level}<i class="cell l{level}"></i>{/each}</div>
              {/each}
              <div class="legend-row">
                <span class="learn">Learn how we count contributions</span>
                <div class="legend"><span>Less</span>{#each [0, 1, 2, 3, 4] as l}<i class="cell l{l}"></i>{/each}<span class="more">More</span></div>
              </div>
            </div>

            <div class="activity">
              <div class="timeline">
                <h2>Contribution activity</h2>
                {#each activity as a}
                  <h3><span>{a.month} <em>2022</em></span></h3>
                  <div class="event" class:hot={a.hot}>
                    <div class="rail"><i class="stub"></i><div class="node">{@render oct('repo')}</div><i class="stem"></i></div>
                    <div class="event-body">
                      <div class="event-title"><span>{a.title}</span>{@render oct('fold')}</div>
                      {#each a.repos as r}
                        <div class="repo">
                          {@render oct(r.icon)}
                          <span class="repo-name"><a class:selected={r.selected} href="#repo">{r.name}</a></span>
                          {#if r.lang}<span class="lang"><i class="lang-dot"></i>{r.lang}</span>{/if}
                          <span class="when">{r.date}</span>
                        </div>
                      {/each}
                    </div>
                  </div>
                {/each}
                <button class="show-more">Show more activity</button>
                <p class="hint">Seeing something unexpected? Take a look at the <a href="#guide">GitHub profile guide</a>.</p>
              </div>
              <a class="year" href="#year">2022</a>
            </div>
          </section>
        </div>
      </div>
      <div class="scrollbar"><i></i></div>
    </div>
  </main>

  <footer class="dock">
    {#each dock as d}
      {#if d.name === '|'}
        <div class="divider"></div>
      {:else}
        <div class="slot" class:running={d.running}>{@render app(d.name)}</div>
      {/if}
    {/each}
  </footer>
</div>

<style>
  :global(body) { margin: 0; }
  .desktop {
    width: 3360px; height: 2100px; display: flex; flex-direction: column; overflow: hidden;
    font-family: Inter, 'Liberation Sans', sans-serif; color: #24292f;
    background:
      linear-gradient(90deg, #b5279c 0, #b93094 14.700%, #c4566f 14.800%, #c4566f 22.700%, #8f9bb4 22.700%, #a3a0b2 54%, #c08fa0 55%, #c09ba5 77%, #b8a0ae 91%, #c9569c 91.500%, #d65ba0) 0 0 / 100% 1000px no-repeat,
      linear-gradient(90deg, #33199a 0, #25127a 8%, #211868 34%, #2a1a80 46.500%, #3e18a8 48%, #4419b2 64%, #661bc4 66%, #6a1bc8 78%, #5420ce 90%, #5222dc);
  }
  i { display: block; font-style: normal; }
  em { font-style: normal; }
  a { text-decoration: none; color: #126ad8; }
  svg { display: block; flex: none; }
  h1, h2, h3, p { margin: 0; }
  span { white-space: nowrap; }
  .oct { width: 32px; height: 32px; color: #57606a; }
  .fav { width: 32px; height: 32px; }

  .menubar {
    height: 48px; flex: none; display: flex; align-items: center; font-size: 26px; letter-spacing: -.6px; color: #241b24;
    background: linear-gradient(90deg, #e5a5cf 0, #e4a9d1 14%, #e0bcd9 28%, #dfcde2 42%, #e0d1e2 52%, #e3cade 72%, #e6bfdb 84%, #e5bbd8 100%);
  }
  .apple { width: 32px; height: 31px; margin: 0 36px 4px 38px; fill: #241b24; }
  .menu { line-height: 46px; height: 46px; padding-bottom: 2px; }
  .menu.bold { font-weight: 700; letter-spacing: 0; }
  .status { margin-left: auto; display: flex; align-items: center; padding: 0 37px 2px 0; }
  .s-shield { width: 30px; height: 35px; margin-right: 38px; }
  .s-battery { width: 52px; height: 24px; margin-right: 36px; }
  .s-wifi { width: 34px; height: 24px; margin-right: 37px; }
  .s-search { width: 26px; height: 26px; margin-right: 37px; }
  .s-control { width: 28px; height: 26px; margin-right: 35px; }
  .date { letter-spacing: -.350px; width: 207px; }
  .time { letter-spacing: .900px; width: 70px; }

  .window {
    margin-top: 2px; height: 1880px; flex: none; border-radius: 20px; overflow: hidden; background: #fff;
    display: flex; flex-direction: column; box-shadow: 0 0 2px rgba(0, 0, 0, .5), 0 24px 70px rgba(0, 0, 0, .55);
  }
  .tabstrip { height: 84px; flex: none; display: flex; align-items: flex-end; background: #dee1e6; box-shadow: inset 0 2px 0 #eef0f2; }
  .lights { width: 145px; padding-left: 42px; display: flex; gap: 16px; margin-bottom: 29px; }
  .lights i { width: 24px; height: 24px; border-radius: 50%; box-sizing: border-box; border: 1px solid rgba(0, 0, 0, .12); }
  .red { background: #fe5f57; } .amber { background: #febb3c; } .green { background: #2ac840; }
  .tab { width: 478px; height: 68px; box-sizing: border-box; padding-left: 24px; display: flex; align-items: center; position: relative; flex: none; }
  .tab.active { background: #fff; border-radius: 16px 16px 0 0; }
  .tab.active::before, .tab.active::after { content: ''; position: absolute; bottom: 0; width: 16px; height: 16px; }
  .tab.active::before { left: -16px; background: radial-gradient(circle at 0 0, transparent 15.500px, #fff 16px); }
  .tab.active::after { right: -16px; background: radial-gradient(circle at 100% 0, transparent 15.500px, #fff 16px); }
  .tab.sep { border-right: 2px solid; border-image: linear-gradient(transparent 15px, #80868b 15px, #80868b 55px, transparent 55px) 1; }
  .tab-title {
    margin-left: 15px; width: 351px; overflow: hidden; font-size: 24px; line-height: 34px; letter-spacing: -.100px; color: #3c4043;
    mask-image: linear-gradient(90deg, #000 300px, transparent 352px);
  }
  .close { width: 18px; height: 18px; margin-left: 16px; }
  .plus { width: 24px; height: 24px; margin: 0 0 22px 33px; }
  .chevron { width: 20px; height: 12px; margin: 0 34px 28px auto; }

  .toolbar { height: 72px; flex: none; display: flex; align-items: center; }
  .nav-buttons { display: flex; gap: 24.500px; padding: 0 23px 0 23.500px; }
  .nav-buttons svg { width: 40px; height: 40px; fill: #5f6368; }
  .omnibox { width: 2800px; height: 56px; border-radius: 28px; background: #f1f3f4; display: flex; align-items: center; box-sizing: border-box; padding: 0 4px 0 27px; }
  .padlock { width: 18px; height: 22px; margin-right: 23px; }
  .url { font-size: 28px; letter-spacing: -.160px; color: #202124; }
  .url em { color: #5f6368; }
  .slots { display: flex; align-items: center; margin-left: auto; }
  .slots > * { width: 28px; height: 28px; margin: 0 18px; }
  .slots > .wide { width: 34px; height: 34px; margin: 0 15px; }
  .slots > .ext { width: 32px; height: 32px; margin: 0 16px; }
  .actions { margin: 0 0 0 12px; }
  .slots > .profile { width: 44px; height: 44px; margin: 0 10px; border-radius: 50%; background: #5d4037; color: #fff; text-align: center; }
  .profile b { font: 400 25px/40px Inter, sans-serif; }

  .bookmarks { height: 64px; flex: none; box-sizing: border-box; padding: 0 0 9px 29px; display: flex; align-items: center; }
  .bookmark { display: flex; align-items: center; gap: 15px; font-size: 24px; letter-spacing: -.330px; color: #3c4043; }

  .page { flex: 1; display: flex; border-top: 2px solid #dadce0; overflow: hidden; }
  .doc { flex: 1; overflow: hidden; }
  nav { height: 96px; border-bottom: 2px solid #d8dee4; display: flex; gap: 16px; padding-left: 1121px; }
  .nav-item { display: flex; align-items: center; gap: 16px; padding: 0 16px; height: 92px; font-size: 28px; letter-spacing: -.480px; color: #24292f; border-bottom: 4px solid transparent; }
  .current { border-bottom-color: #fd8c73; font-weight: 600; }
  .nav-label { margin-top: 4px; line-height: 36px; }
  .nav-item .oct { margin-top: 4px; }
  .counter { width: 40px; height: 40px; border-radius: 20px; background: #eff1f3; font-size: 24px; line-height: 40px; margin-top: 4px; letter-spacing: 0; text-align: center; }
  .counter.double { width: 56px; }

  .columns { display: flex; padding-left: 448px; gap: 47px; }
  aside { width: 594px; flex: none; }
  .avatar-wrap { margin-top: -98px; height: 356px; position: relative; }
  .avatar { width: 594px; height: 356px; }
  .emoji { position: absolute; right: 4px; bottom: 67px; width: 74px; height: 74px; border-radius: 50%; border: 2px solid #d3d9df; background: #fff; box-shadow: 0 2px 2px rgba(0, 0, 0, .06); display: grid; place-items: center; }
  .emoji svg { width: 32px; height: 32px; }
  h1 { margin-top: 23px; font-size: 39px; font-weight: 300; line-height: 60px; letter-spacing: -1.100px; color: #57606a; }
  .edit { display: block; width: 592px; height: 64px; margin: 25px 0 0 1px; border: 2px solid #d8dbde; border-radius: 12px; background: #f6f8fa; font: 500 28px Inter, sans-serif; letter-spacing: -.150px; color: #24292f; box-shadow: 0 2px 0 rgba(31, 35, 40, .04); padding: 0; }
  .follow { margin: 37px 0 0 1px; height: 32px; display: flex; align-items: center; font-size: 28px; letter-spacing: -.600px; color: #57606a; }
  .follow .oct { margin-right: 8px; }
  .follow b { font-weight: 600; color: #24292f; margin-right: 8px; }
  .follow span { margin-right: 8px; }

  .content { width: 1792px; }
  .pinned { width: 876px; height: 50px; border: 2px solid #d0d7de; border-top: 0; border-radius: 0 0 12px 12px; overflow: hidden; display: flex; }
  .pinned .lang-dot { margin: -12px 7px 0 32px; }
  .pinned span { font-size: 24px; line-height: 30px; height: 30px; margin-top: -14px; letter-spacing: -.350px; color: #57606a; }
  .lang-dot { width: 22px; height: 22px; border-radius: 50%; background: #a97bff; border: 1px solid #976fe2; }
  .heading-row { margin-top: 82px; height: 48px; display: flex; align-items: center; justify-content: space-between; }
  h2 { font-size: 32px; font-weight: 400; line-height: 48px; letter-spacing: -.620px; }
  .muted-link { display: flex; align-items: center; gap: 7px; font-size: 24px; letter-spacing: .080px; color: #57606a; padding-top: 1px; }
  .caret { width: 0; border: 8px solid transparent; border-top-color: #57606a; border-bottom: 0; margin-top: 3px; }

  .calendar { margin-top: 14px; height: 324px; padding: 24px 0 0; border: 2px solid #d0d7de; border-radius: 12px 12px 0 0; }
  .months { height: 40px; padding-left: 133px; display: flex; line-height: 32px; font-size: 24px; letter-spacing: -.100px; }
  .week-row { height: 22px; margin-bottom: 8px; padding-left: 71px; display: flex; gap: 8px; line-height: 25px; font-size: 24px; letter-spacing: -.800px; }
  .day { width: 54px; }
  .cell { width: 22px; height: 22px; box-sizing: border-box; border: 2px solid rgba(27, 31, 35, .06); border-radius: 4px; }
  .l0 { background: #ebedf0; } .l1 { background: #9fe9a9; } .l2 { background: #49c367; } .l3 { background: #389f53; } .l4 { background: #276d3c; }
  .legend-row { margin-top: 24px; height: 32px; padding: 0 80px; display: flex; justify-content: space-between; align-items: center; font-size: 24px; letter-spacing: -.140px; color: #57606a; }
  .legend { display: flex; align-items: center; gap: 6.700px; }
  .legend .cell { width: 20px; height: 20px; margin-bottom: 3px; }

  .activity { margin-top: 48px; display: flex; gap: 64px; align-items: flex-start; }
  .timeline { width: 1493px; }
  .timeline h2 { padding-top: 1px; margin-bottom: -1px; }
  .year { width: 203px; height: 66px; padding: 2px 0 0 32px; border-radius: 12px; background: #166cd7; color: #fff; font-size: 24px; font-weight: 500; letter-spacing: -.600px; line-height: 66px; }
  h3 { margin-top: 40px; height: 36px; padding-left: 16px; display: flex; align-items: center; gap: 32px; font-size: 24px; font-weight: 600; letter-spacing: .150px; }
  h3 em { color: #57606a; }
  h3::after { content: ''; flex: 1; height: 2px; background: #d0d7de; }
  .event + h3 { margin-top: 57px; }
  .event { margin-top: 15px; display: flex; padding-left: 6px; gap: 20px; }
  .rail { width: 56px; display: flex; flex-direction: column; align-items: center; gap: 4px; }
  .stub { width: 4px; height: 32px; background: #d8dee4; }
  .node { width: 56px; height: 56px; border-radius: 50%; background: #eaeef2; display: grid; place-items: center; }
  .node .oct { margin-top: 1px; }
  .stem { width: 4px; flex: 1; background: #d8dee4; }
  .event-body { flex: 1; padding: 41px 0 32px; }
  .event-title { height: 40px; margin-bottom: 18px; display: flex; align-items: center; justify-content: space-between; font-size: 32px; letter-spacing: -.730px; }
  .event-title .oct { margin-top: 6px; }
  .hot .event-title, .hot .event-title .oct { color: #126ad8; }
  .repo { height: 60px; display: flex; align-items: center; }
  .repo .oct { margin: 6px 16px 0 0; }
  .repo-name { width: 892px; font-size: 28px; letter-spacing: -.530px; }
  .repo-name a { display: inline-block; line-height: 42px; }
  .selected { background: #b3d7ff; }
  .lang { display: flex; align-items: center; gap: 8px; font-size: 24px; letter-spacing: -.300px; color: #57606a; padding-bottom: 6px; }
  .lang .lang-dot { margin-bottom: 2px; }
  .when { margin-left: auto; font-size: 24px; letter-spacing: 0; color: #57606a; padding-top: 11px; }
  .show-more { display: block; width: 1493px; height: 76px; margin-top: 49px; border: 2px solid #d0d7de; border-radius: 12px; background: #fff; color: #126ad8; font: 600 24px Inter, sans-serif; letter-spacing: .150px; padding: 0; }
  .hint { margin-top: 51px; font-size: 24px; line-height: 32px; letter-spacing: -.040px; color: #57606a; }

  .scrollbar { width: 22px; flex: none; padding-left: 6px; border-left: 2px solid #e8e8e8; background: #fafafa; }
  .scrollbar i { margin-top: 314px; height: 1151px; width: 16px; border-radius: 8px; background: #c1c1c1; }

  .dock {
    position: relative; width: 2708px; height: 154px; margin: 2px 0 0 320px; padding: 0 4px; flex: none; display: flex;
    border: 2px solid rgba(255, 255, 255, .28); border-radius: 50px; box-sizing: content-box;
    background: linear-gradient(90deg, #7b5cc6 0, #7561ce 22%, #7762da 36%, #8a5ef2 44%, #935ff7 56%, #b05bf7 65%, #b95af6 80%, #b259f6 92%, #9c5df6 100%) border-box;
    box-shadow: 0 0 80px rgba(0, 0, 0, .27);
  }
  .slot { width: 136px; height: 100%; display: flex; flex-direction: column; align-items: center; justify-content: space-between; padding: 20px 0 2px; box-sizing: border-box; }
  .slot::after { content: ''; width: 8px; height: 8px; border-radius: 50%; margin-bottom: 2px; }
  .running::after { background: #16006a; }
  .app { width: 103px; height: 103px; overflow: visible; filter: drop-shadow(0 2px 3px rgba(0, 0, 0, .25)); }
  .petal { mix-blend-mode: multiply; opacity: .9; }
  .divider { width: 2px; height: 118px; margin: 18px 28px 0 33px; background: rgba(70, 20, 140, .6); }
  .mono { font-family: 'DejaVu Sans Mono', monospace; font-weight: 700; }
  .badge { font-family: Inter, sans-serif; }
</style>
